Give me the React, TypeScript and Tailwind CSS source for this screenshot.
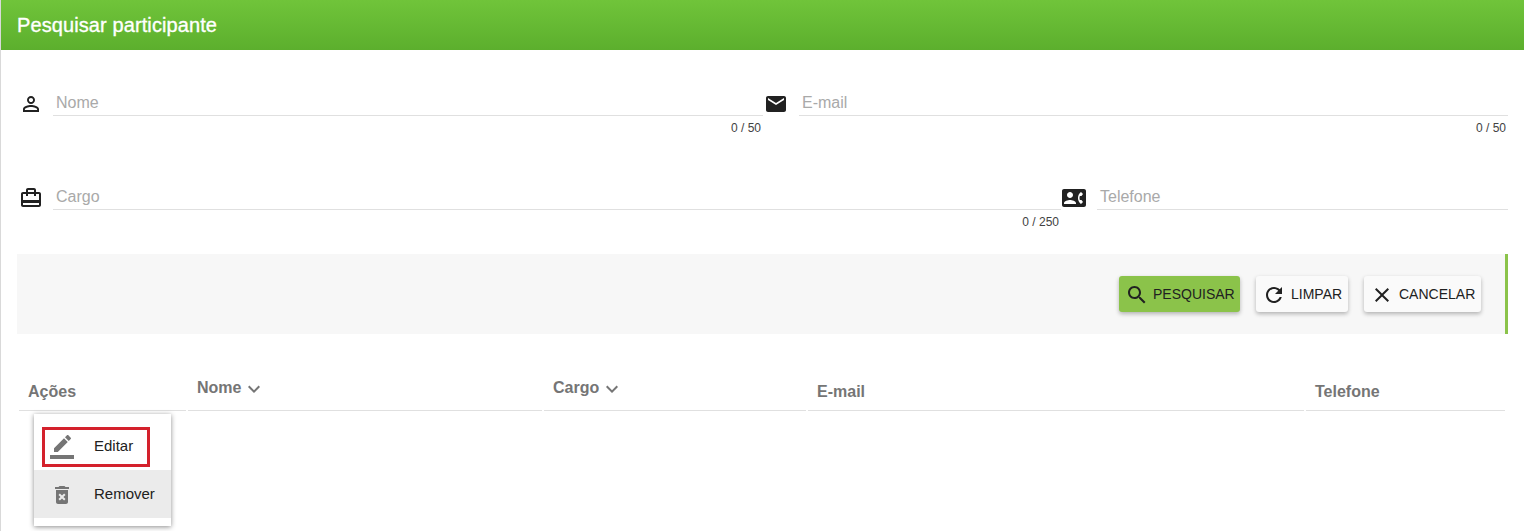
import React from 'react';

const PATHS = {
  person:
    'M12 5.9c1.16 0 2.1.94 2.1 2.1s-.94 2.1-2.1 2.1S9.9 9.16 9.9 8s.94-2.1 2.1-2.1m0 9c2.97 0 6.1 1.46 6.1 2.1v1.1H5.9V17c0-.64 3.13-2.1 6.1-2.1M12 4C9.79 4 8 5.79 8 8s1.79 4 4 4 4-1.79 4-4-1.79-4-4-4zm0 9c-2.67 0-8 1.34-8 4v3h16v-3c0-2.66-5.33-4-8-4z',
  email:
    'M20 4H4c-1.1 0-1.99.9-1.99 2L2 18c0 1.1.9 2 2 2h16c1.1 0 2-.9 2-2V6c0-1.1-.9-2-2-2zm0 4l-8 5-8-5V6l8 5 8-5v2z',
  travel:
    'M20 6h-3V4c0-1.11-.89-2-2-2H9c-1.11 0-2 .89-2 2v2H4c-1.11 0-2 .89-2 2v11c0 1.11.89 2 2 2h16c1.11 0 2-.89 2-2V8c0-1.11-.89-2-2-2zM9 4h6v2H9V4zm11 15H4v-2h16v2zm0-5H4V8h3v2h2V8h6v2h2V8h3v6z',
  phone:
    'M22 3H2C.9 3 0 3.9 0 5v14c0 1.1.9 2 2 2h20c1.1 0 1.99-.9 1.99-2L24 5c0-1.1-.9-2-2-2zM8 6c1.66 0 3 1.34 3 3s-1.34 3-3 3-3-1.34-3-3 1.34-3 3-3zm6 12H2v-1c0-2 4-3.1 6-3.1s6 1.1 6 3.1v1zm3.85-4h1.64L21 16l-1.99 1.99c-1.31-.98-2.28-2.38-2.73-3.99-.18-.64-.28-1.31-.28-2s.1-1.36.28-2c.45-1.62 1.42-3.01 2.73-3.99L21 8l-1.51 2h-1.64c-.22.63-.35 1.3-.35 2s.13 1.37.35 2z',
  search:
    'M15.5 14h-.79l-.28-.27C15.41 12.59 16 11.11 16 9.5 16 5.91 13.09 3 9.5 3S3 5.91 3 9.5 5.91 16 9.5 16c1.61 0 3.09-.59 4.23-1.57l.27.28v.79l5 4.99L20.49 19l-4.99-5zm-6 0C7.01 14 5 11.99 5 9.5S7.01 5 9.5 5 14 7.01 14 9.5 11.99 14 9.5 14z',
  refresh:
    'M17.65 6.35C16.2 4.9 14.21 4 12 4c-4.42 0-7.99 3.58-7.99 8s3.57 8 7.99 8c3.73 0 6.84-2.55 7.73-6h-2.08c-.82 2.33-3.04 4-5.65 4-3.31 0-6-2.69-6-6s2.69-6 6-6c1.66 0 3.14.69 4.22 1.78L13 11h7V4l-2.35 2.35z',
  close:
    'M19 6.41L17.59 5 12 10.59 6.41 5 5 6.41 10.59 12 5 17.59 6.41 19 12 13.41 17.59 19 19 17.59 13.41 12z',
  expand: 'M16.59 8.59L12 13.17 7.41 8.59 6 10l6 6 6-6z',
  edit: 'M17.75 7L14 3.25l-10 10V17h3.75l10-10zm2.96-2.96c.39-.39.39-1.02 0-1.41L18.37.29c-.39-.39-1.02-.39-1.41 0L15 2.25 18.75 6l1.96-1.96zM0 20h24v4H0z',
  remove:
    'M6 19c0 1.1.9 2 2 2h8c1.1 0 2-.9 2-2V7H6v12zm2.46-7.12l1.41-1.41L12 12.59l2.12-2.12 1.41 1.41L13.41 14l2.12 2.12-1.41 1.41L12 15.41l-2.12 2.12-1.41-1.41L10.59 14l-2.13-2.12zM15.5 4l-1-1h-5l-1 1H5v2h14V4z',
};

function Icon({ name, className = 'size-6' }: { name: keyof typeof PATHS; className?: string }) {
  return (
    <svg viewBox="0 0 24 24" fill="currentColor" className={`shrink-0 ${className}`}>
      <path d={PATHS[name]} />
    </svg>
  );
}

interface FieldProps {
  icon: keyof typeof PATHS;
  label: string;
  counter?: string;
  className: string;
}

function Field({ icon, label, counter, className }: FieldProps) {
  return (
    <div className={`flex h-[50px] ${className}`}>
      <Icon name={icon} className="mt-[3px] size-6 text-[#212121]" />
      <div className="min-w-0 flex-1">
        <div className="h-[27px] border-b border-[#e0e0e0] pl-[3px] text-base leading-[27px] text-[#a9a9a9]">
          {label}
        </div>
        {counter && (
          <div className="pt-[4px] pr-[2px] text-right text-xs leading-4 text-[#424242]">{counter}</div>
        )}
      </div>
    </div>
  );
}

interface ActionProps {
  icon: keyof typeof PATHS;
  label: string;
  className: string;
}

function Action({ icon, label, className }: ActionProps) {
  return (
    <button
      className={`flex h-9 items-center rounded-[3px] pl-1.5 text-sm whitespace-nowrap text-[#212121] shadow-[0_2px_4px_rgba(0,0,0,0.28)] ${className}`}
    >
      <Icon name={icon} className="mt-0.5 size-6" />
      <span>{label}</span>
    </button>
  );
}

const COLUMNS = [
  { label: 'Ações', sortable: false, width: 'w-[167px]' },
  { label: 'Nome', sortable: true, width: 'w-[354px]' },
  { label: 'Cargo', sortable: true, width: 'w-[262px]' },
  { label: 'E-mail', sortable: false, width: 'w-[496px]' },
  { label: 'Telefone', sortable: false, width: 'w-[199px]' },
];

export default function App() {
  return (
    <main className="h-[531px] w-[1524px] overflow-hidden border-l border-[#d9d9d9] bg-white font-['Liberation_Sans',Arial,sans-serif]">
      <header className="flex h-[50px] items-center bg-linear-to-b from-[#70c43a] to-[#5caf2d] pl-4 text-xl text-white">
        <h1 className="tracking-[0.1px] [-webkit-text-stroke:0.35px_white]">Pesquisar participante</h1>
      </header>

      <section className="flex justify-between pt-[39px] pr-4 pl-[18px]">
        <Field icon="person" label="Nome" counter="0 / 50" className="w-[744px] gap-[10px]" />
        <Field icon="email" label="E-mail" counter="0 / 50" className="w-[744px] gap-[11px]" />
      </section>
      <section className="flex justify-between pt-[44px] pr-4 pl-[18px]">
        <Field icon="travel" label="Cargo" counter="0 / 250" className="w-[1042px] gap-[10px]" />
        <Field icon="phone" label="Telefone" className="w-[446px] gap-[11px]" />
      </section>

      <section className="mt-[21px] ml-4 flex h-20 w-[1491px] items-center justify-end gap-4 border-r-[3px] border-[#8bc34a] bg-[#f7f7f7] pr-6">
        <Action icon="search" label="PESQUISAR" className="w-[121px] gap-1 bg-[#8bc34a]" />
        <Action icon="refresh" label="LIMPAR" className="w-[92px] gap-[5px] bg-[#fafafa]" />
        <Action icon="close" label="CANCELAR" className="w-[117px] gap-[5px] bg-[#fafafa]" />
      </section>

      <section className="mt-10 ml-[18px] flex gap-0.5 text-base font-bold text-[#757575]">
        {COLUMNS.map(({ label, sortable, width }) => (
          <div key={label} className={`flex h-[37px] border-b border-[#e0e0e0] pl-[9px] leading-5 ${width}`}>
            {sortable ? (
              <span className="flex items-start gap-px pt-1">
                {label}
                <Icon name="expand" className="-mt-px size-6" />
              </span>
            ) : (
              <span className="pt-2">{label}</span>
            )}
          </div>
        ))}
      </section>

      <nav className="relative mt-[3px] ml-[33px] h-[112px] w-[137px] bg-white pt-2 text-[15px] text-[#212121] shadow-[0_1px_5px_rgba(0,0,0,0.45)]">
        <div className="flex h-12 items-center pl-4">
          <Icon name="edit" className="mt-0.5 size-6 text-[#757575]" />
          <span className="pl-5">Editar</span>
        </div>
        <div className="flex h-12 items-center bg-[#ebebeb] pl-4">
          <Icon name="remove" className="mt-0.5 size-6 text-[#757575]" />
          <span className="pl-5">Remover</span>
        </div>
        <div className="absolute top-[13px] left-2 h-10 w-[108px] border-[3px] border-[#d4212c]" />
      </nav>
    </main>
  );
}
